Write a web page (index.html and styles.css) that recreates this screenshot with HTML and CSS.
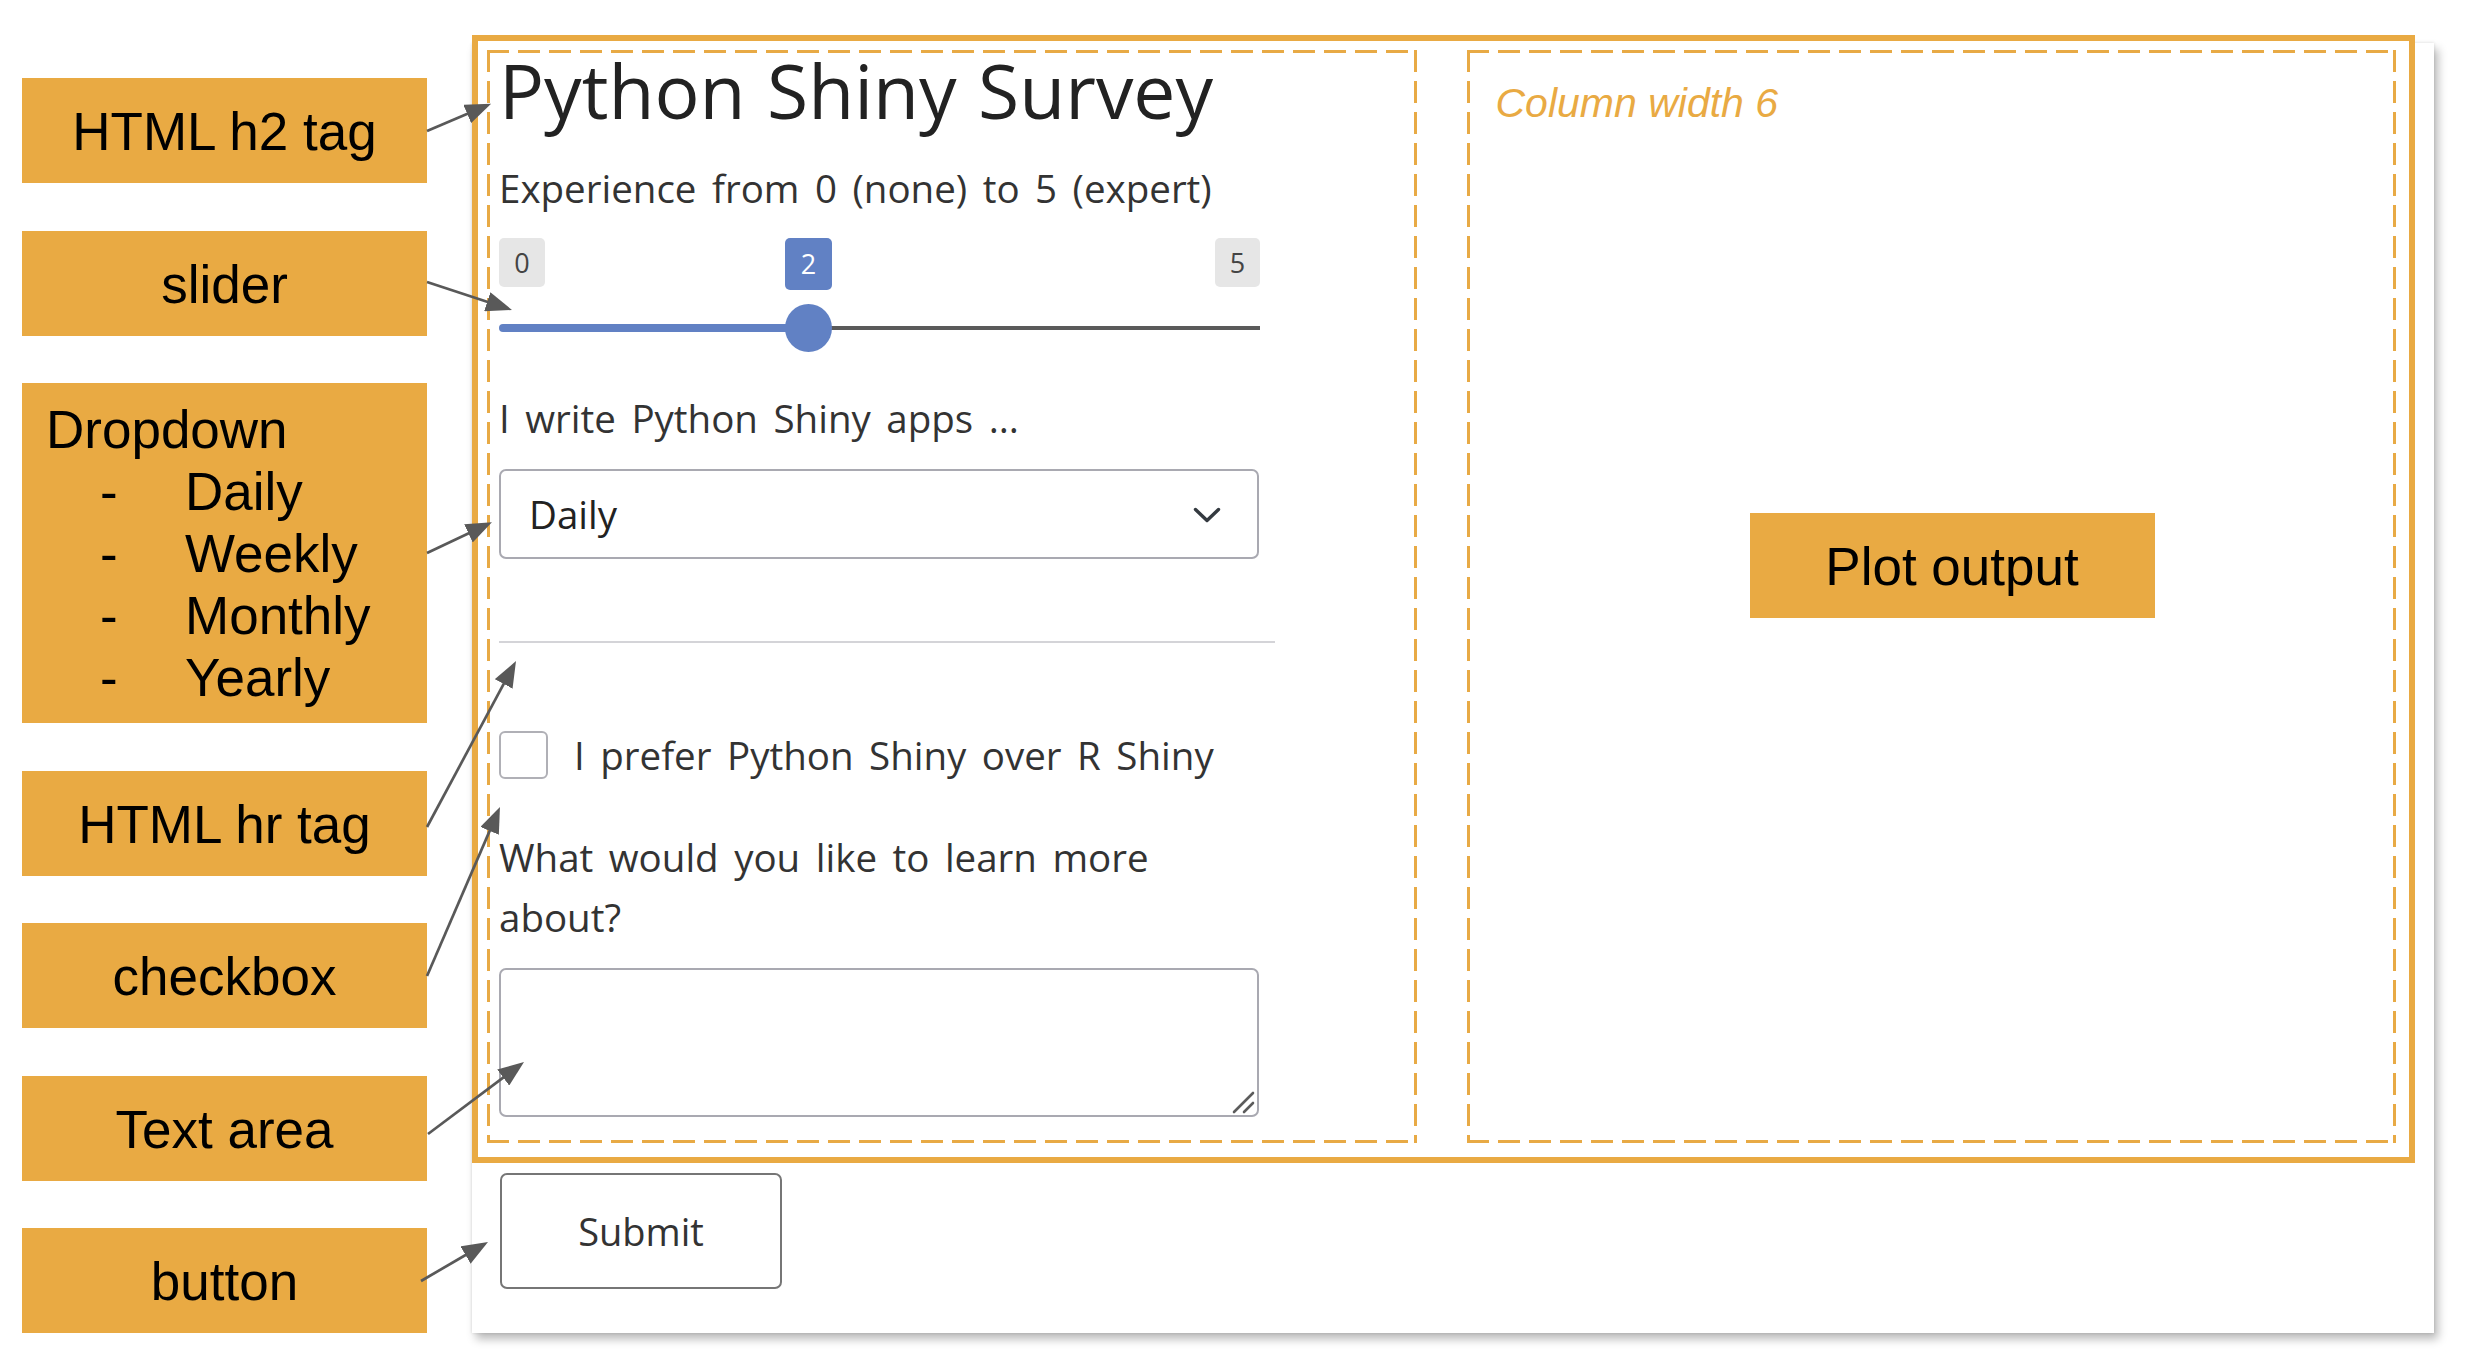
FILE: index.html
```html
<!DOCTYPE html>
<html lang="en">
<head>
<meta charset="utf-8">
<title>Python Shiny Survey – annotated</title>
<link rel="stylesheet" href="styles.css">
</head>
<body>
<div class="page">
  <div class="labels">
    <div class="tag">HTML h2 tag</div>
    <div class="tag">slider</div>
    <div class="tag tag-list">
      <div class="list-title">Dropdown</div>
      <div class="list-item"><span class="dash">-</span><span>Daily</span></div>
      <div class="list-item"><span class="dash">-</span><span>Weekly</span></div>
      <div class="list-item"><span class="dash">-</span><span>Monthly</span></div>
      <div class="list-item"><span class="dash">-</span><span>Yearly</span></div>
    </div>
    <div class="tag">HTML hr tag</div>
    <div class="tag">checkbox</div>
    <div class="tag">Text area</div>
    <div class="tag">button</div>
  </div>

  <div class="panel">
    <div class="frame">
      <div class="col col-left">
        <h2 class="title">Python Shiny Survey</h2>
        <div class="label label-exp">Experience from 0 (none) to 5 (expert)</div>
        <div class="slider">
          <span class="pill pill-min">0</span>
          <span class="pill pill-max">5</span>
          <span class="pill pill-val">2</span>
          <span class="track-bar"></span>
          <span class="track-fill"></span>
          <span class="thumb"></span>
        </div>
        <div class="label label-sel">I write Python Shiny apps ...</div>
        <div class="select">
          <span>Daily</span>
          <svg class="chev" width="28" height="17" viewBox="0 0 28 17"><polyline points="2.5,2.5 14,13.5 25.5,2.5" fill="none" stroke="#343a40" stroke-width="3.4" stroke-linecap="round" stroke-linejoin="round"/></svg>
        </div>
        <hr class="rule">
        <div class="check-row">
          <span class="checkbox"></span>
          <span class="check-label">I prefer Python Shiny over R Shiny</span>
        </div>
        <div class="label label-ta">What would you like to learn more about?</div>
        <div class="ta-wrap">
          <textarea class="ta"></textarea>
          <svg class="grip" width="24" height="24" viewBox="0 0 24 24"><line x1="3" y1="22" x2="22" y2="3" stroke="#5c5c5c" stroke-width="2.6" stroke-linecap="round"/><line x1="13" y1="22" x2="22" y2="13" stroke="#5c5c5c" stroke-width="2.6" stroke-linecap="round"/></svg>
        </div>
      </div>
      <div class="col col-right">
        <div class="col-note">Column width 6</div>
        <div class="tag plot-tag">Plot output</div>
      </div>
    </div>
    <button class="submit" type="button">Submit</button>
  </div>
</div>

<svg class="arrows" width="2491" height="1365" viewBox="0 0 2491 1365">
  <defs>
    <marker id="ah" markerUnits="userSpaceOnUse" markerWidth="26" markerHeight="20" refX="15" refY="10" orient="auto">
      <path d="M0,0 L26,10 L0,20 Z" fill="#595959"/>
    </marker>
  </defs>
  <g stroke="#595959" stroke-width="2.7" fill="none" marker-end="url(#ah)">
    <line x1="427" y1="131" x2="481" y2="108"/>
    <line x1="427" y1="282" x2="501.5" y2="306.5"/>
    <line x1="427" y1="553" x2="482" y2="527"/>
    <line x1="427" y1="827" x2="510.8" y2="670.7"/>
    <line x1="427" y1="976" x2="495.6" y2="817.1"/>
    <line x1="428" y1="1134" x2="515.2" y2="1068.6"/>
    <line x1="421" y1="1281" x2="478.5" y2="1247.5"/>
  </g>
</svg>
</body>
</html>
```

FILE: styles.css
```css
:root {
  --orange: #e9aa43;
  --dash: #e8aa45;
  --blue: #6181c4;
  --ink: #333333;
}

* { box-sizing: border-box; }

html, body {
  margin: 0;
  padding: 0;
  background: #ffffff;
}

body {
  width: 2491px;
  height: 1365px;
  overflow: hidden;
  position: relative;
}

.page {
  display: flex;
  align-items: flex-start;
}

/* ---------- annotation labels ---------- */
.labels {
  margin-left: 22px;
  margin-top: 78px;
  width: 405px;
  display: flex;
  flex-direction: column;
  gap: 47.5px;
}

.tag {
  width: 405px;
  height: 105px;
  background: var(--orange);
  color: #000;
  font-family: "Liberation Sans", Arial, sans-serif;
  font-size: 53px;
  line-height: 103px;
  padding-top: 2px;
  text-align: center;
  white-space: nowrap;
}

.tag-list {
  height: 340px;
  text-align: left;
  line-height: 62px;
  padding: 16px 0 14px 24px;
}

.list-title { height: 62px; }

.list-item {
  display: flex;
  height: 62px;
}

.dash {
  width: 85px;
  margin-left: 54px;
}

/* ---------- app panel ---------- */
.panel {
  margin-left: 45px;
  margin-top: 43px;
  width: 1962px;
  height: 1290px;
  background: #ffffff;
  box-shadow: 4px 6px 9px rgba(0, 0, 0, 0.28), 0 0 3px rgba(0, 0, 0, 0.12);
  font-family: "Open Sans", "Noto Sans", sans-serif;
  color: var(--ink);
  word-spacing: 5.5px;
}

.frame {
  margin-top: -8px;
  width: 1943px;
  height: 1128px;
  border: 6px solid var(--orange);
  padding: 9px 13px 14px 9px;
  display: grid;
  grid-template-columns: 1fr 1fr;
  column-gap: 50px;
  background: #ffffff;
}

.col {
  background:
    repeating-linear-gradient(90deg, var(--dash) 0 22px, transparent 22px 31px) top left / 100% 3px no-repeat,
    repeating-linear-gradient(90deg, var(--dash) 0 22px, transparent 22px 31px) bottom left / 100% 3px no-repeat,
    repeating-linear-gradient(180deg, var(--dash) 0 22px, transparent 22px 31px) top left / 3px 100% no-repeat,
    repeating-linear-gradient(180deg, var(--dash) 0 22px, transparent 22px 31px) top right / 3px 100% no-repeat;
}

.col-left {
  padding: 4px 10px 0 12px;
  display: flex;
  flex-direction: column;
  align-items: flex-start;
}

.title {
  margin: 0;
  font-size: 75px;
  line-height: 73px;
  font-weight: 400;
  color: #222;
  white-space: nowrap;
  word-spacing: 2px;
}

.label {
  font-size: 38.5px;
  line-height: 50px;
  white-space: nowrap;
}

.label-exp { margin-top: 36px; }

/* slider */
.slider {
  position: relative;
  width: 761px;
  height: 120px;
  margin-top: 25px;
  margin-bottom: 35px;
}

.pill {
  position: absolute;
  top: 0;
  height: 49px;
  border-radius: 5px;
  font-size: 27px;
  line-height: 49px;
  text-align: center;
  background: #e6e6e6;
  color: #444;
}

.pill-min { left: 0; width: 46px; }
.pill-max { right: 0; width: 45px; }

.pill-val {
  left: 286px;
  width: 47px;
  height: 52px;
  line-height: 52px;
  background: var(--blue);
  color: #ffffff;
}

.track-bar {
  position: absolute;
  left: 305px;
  right: 0;
  top: 88px;
  height: 4px;
  background: #5a5a5a;
}

.track-fill {
  position: absolute;
  left: 0;
  width: 312px;
  top: 86px;
  height: 8px;
  border-radius: 4px;
  background: var(--blue);
}

.thumb {
  position: absolute;
  left: 286px;
  top: 66px;
  width: 47px;
  height: 48px;
  border-radius: 50%;
  background: var(--blue);
}

/* select */
.select {
  margin-top: 26px;
  width: 760px;
  height: 90px;
  border: 2px solid #a9a9b1;
  border-radius: 7px;
  display: flex;
  align-items: center;
  justify-content: space-between;
  padding: 0 36px 0 28px;
  font-size: 38.5px;
  color: #222;
}

.chev { margin-top: 2px; }

/* hr */
.rule {
  margin: 82px 0 0 0;
  width: 776px;
  height: 2px;
  border: 0;
  background: #d4d4d8;
}

/* checkbox */
.check-row {
  margin-top: 88px;
  display: flex;
  align-items: center;
  height: 48px;
  gap: 26px;
}

.checkbox {
  width: 49px;
  height: 48px;
  border: 2px solid #b0b0b6;
  border-radius: 6px;
  background: #fff;
}

.check-label {
  font-size: 38.5px;
  line-height: 50px;
  white-space: nowrap;
}

.label-ta {
  margin-top: 48px;
  width: 760px;
  white-space: normal;
  line-height: 60px;
}

/* textarea */
.ta-wrap {
  position: relative;
  margin-top: 21px;
  width: 760px;
  height: 149px;
}

.ta {
  display: block;
  width: 100%;
  height: 100%;
  margin: 0;
  border: 2px solid #a9a9b1;
  border-radius: 7px;
  resize: none;
  background: #fff;
  font-family: inherit;
  font-size: 37px;
}

.grip {
  position: absolute;
  right: 4px;
  bottom: 3px;
}

/* right column */
.col-right {
  padding: 30px 0 0 29px;
  display: flex;
  flex-direction: column;
  align-items: flex-start;
  word-spacing: normal;
}

.col-note {
  font-family: "Liberation Sans", Arial, sans-serif;
  font-style: italic;
  font-size: 41px;
  line-height: 46px;
  color: var(--orange);
}

.plot-tag {
  margin-top: 387px;
  margin-left: 254px;
}

/* submit */
.submit {
  display: block;
  margin: 10px 0 0 28px;
  width: 282px;
  height: 116px;
  border: 2px solid #767676;
  border-radius: 7px;
  background: #fff;
  font-family: "Open Sans", "Noto Sans", sans-serif;
  font-size: 38px;
  color: #333;
  padding: 0;
}

/* arrows overlay */
.arrows {
  position: absolute;
  left: 0;
  top: 0;
  pointer-events: none;
}
```
